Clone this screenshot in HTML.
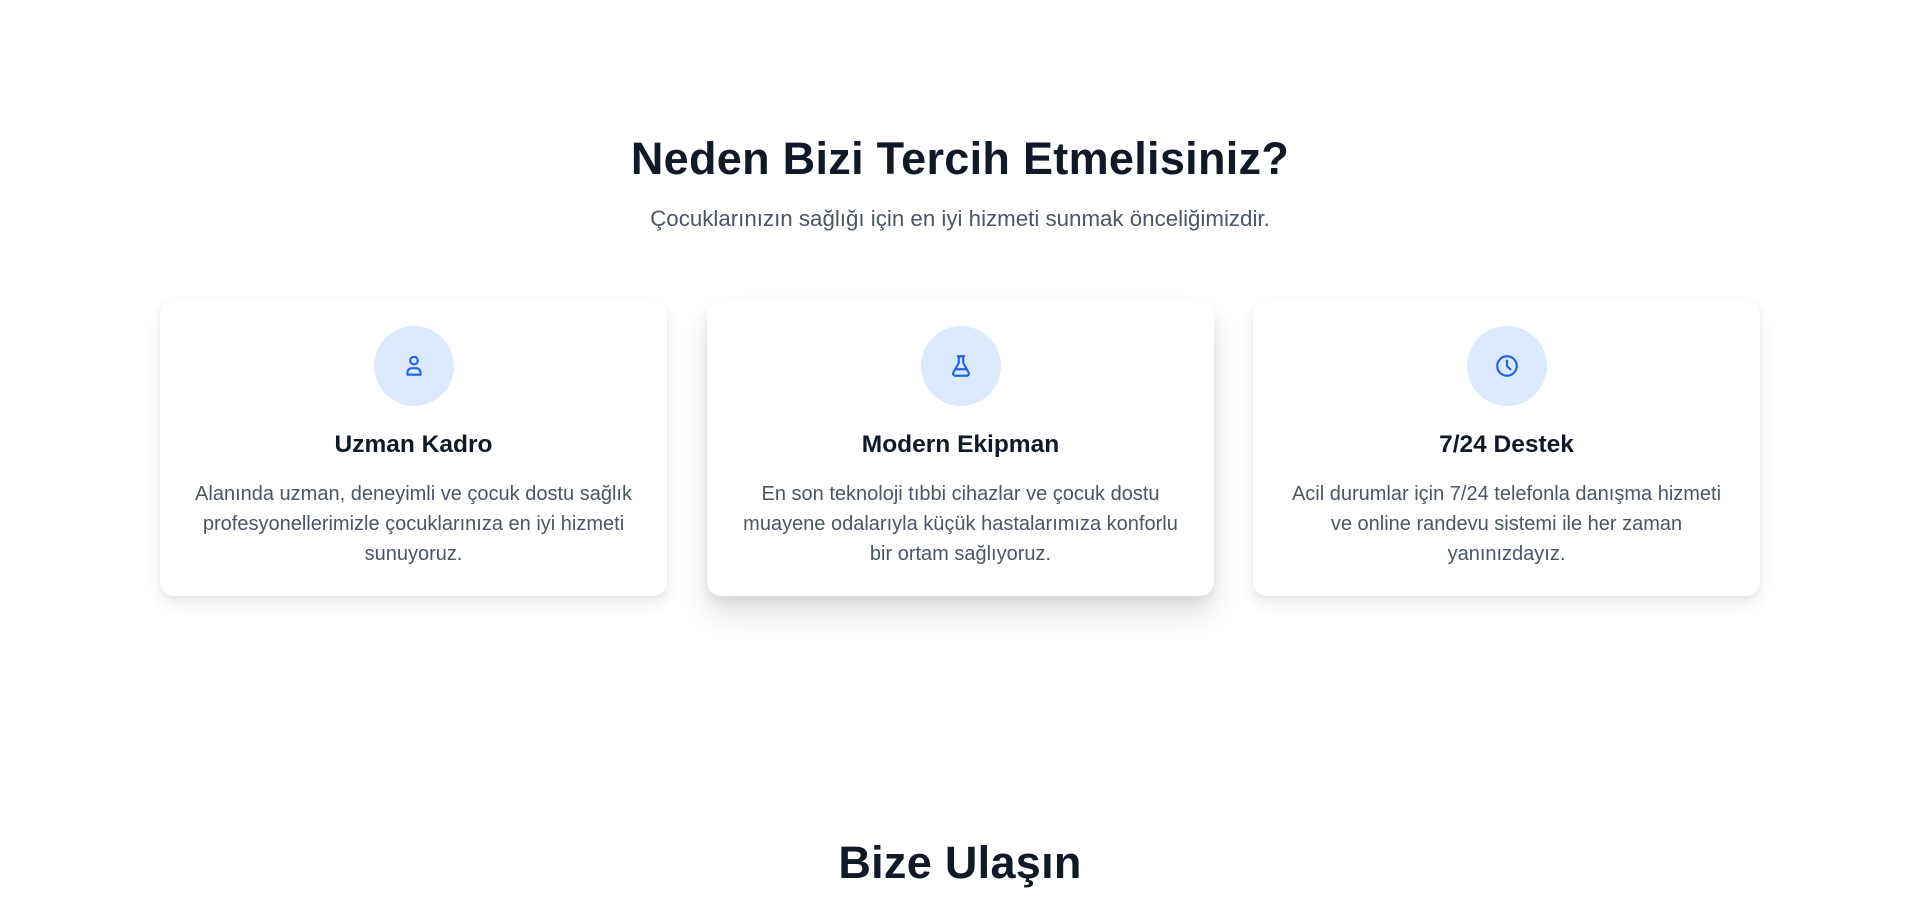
<!DOCTYPE html>
<html><head><meta charset="utf-8"><style>
*{margin:0;padding:0;box-sizing:border-box}
body{width:1920px;height:914px;overflow:hidden;background:#fff;font-family:"Liberation Sans",sans-serif;color:#111827}
h2{position:absolute;left:0;width:1920px;text-align:center;font-size:45px;font-weight:700;letter-spacing:0.3px}
.sub{position:absolute;left:0;width:1920px;top:206px;text-align:center;font-size:22.3px;color:#4b5563}
.card{position:absolute;top:300px;width:507px;height:296px;background:#fff;border-radius:14px;box-shadow:0 8px 16px rgba(0,0,0,0.08),0 2px 6px rgba(0,0,0,0.05);text-align:center}
.card.hi{box-shadow:0 18px 30px rgba(0,0,0,0.12),0 6px 10px rgba(0,0,0,0.06)}
.ic{width:80px;height:80px;border-radius:50%;background:#dbeafe;margin:26px auto 0;display:flex;align-items:center;justify-content:center}
.card h3{font-size:24.5px;font-weight:700;margin-top:25px;height:34px}
.card p{font-size:20px;line-height:30px;color:#4b5563;margin:14px 28px 0}
</style></head><body>
<h2 style="top:133px">Neden Bizi Tercih Etmelisiniz?</h2>
<div class="sub">Çocuklarınızın sağlığı için en iyi hizmeti sunmak önceliğimizdir.</div>
<div class="card" style="left:160px"><div class="ic"><svg width="26" height="26" viewBox="0 0 24 24" fill="none" stroke="#2563eb" stroke-width="2" stroke-linecap="round" stroke-linejoin="round"><circle cx="12" cy="7" r="3.5"/><path d="M6 20v-2a4 4 0 0 1 4-4h4a4 4 0 0 1 4 4v2z"/></svg></div><h3>Uzman Kadro</h3><p>Alanında uzman, deneyimli ve çocuk dostu sağlık profesyonellerimizle çocuklarınıza en iyi hizmeti sunuyoruz.</p></div>
<div class="card hi" style="left:707px"><div class="ic"><svg width="26" height="26" viewBox="0 0 24 24" fill="none" stroke="#2563eb" stroke-width="2" stroke-linecap="round" stroke-linejoin="round"><path d="M9 3h6M10 3v6l-5 9a2 2 0 0 0 2 3h10a2 2 0 0 0 2-3l-5-9V3M7 15h10"/></svg></div><h3>Modern Ekipman</h3><p>En son teknoloji tıbbi cihazlar ve çocuk dostu muayene odalarıyla küçük hastalarımıza konforlu bir ortam sağlıyoruz.</p></div>
<div class="card" style="left:1253px"><div class="ic"><svg width="26" height="26" viewBox="0 0 24 24" fill="none" stroke="#2563eb" stroke-width="2" stroke-linecap="round" stroke-linejoin="round"><circle cx="12" cy="12" r="9"/><path d="M12 7v5l3 3"/></svg></div><h3>7/24 Destek</h3><p>Acil durumlar için 7/24 telefonla danışma hizmeti ve online randevu sistemi ile her zaman yanınızdayız.</p></div>
<h2 style="top:837px">Bize Ulaşın</h2>
</body></html>
